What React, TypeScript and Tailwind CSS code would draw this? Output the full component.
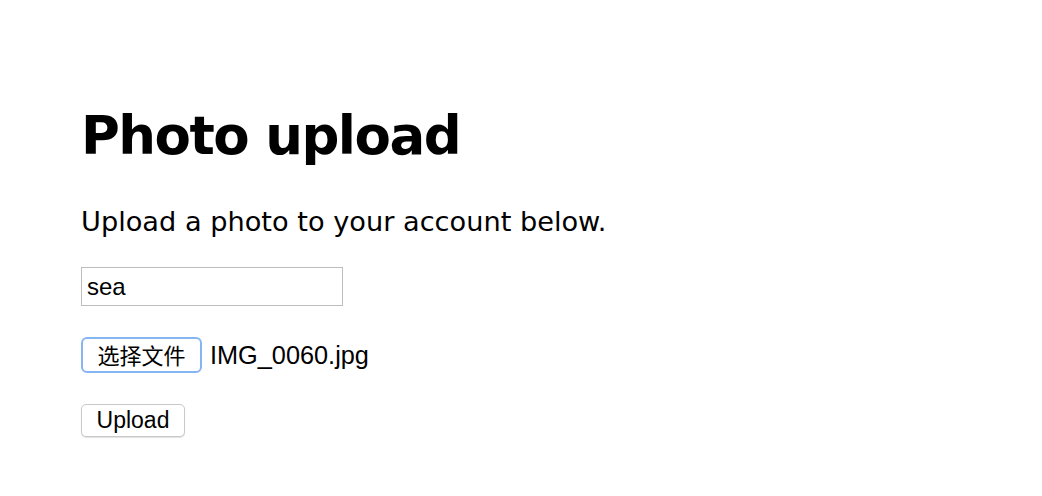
export default function App() {
  return (
    <div className="min-h-screen bg-white pl-[81px] pt-[104px] text-black">
      <h1
        className="text-[53px] font-bold leading-[64px] tracking-[-1.5px]"
        style={{ fontFamily: '"DejaVu Sans", sans-serif' }}
      >
        Photo upload
      </h1>
      <p
        className="mt-[38px] text-[27.2px] leading-[32px]"
        style={{ fontFamily: '"DejaVu Sans", sans-serif' }}
      >
        Upload a photo to your account below.
      </p>
      <div className="mt-[29px]" style={{ fontFamily: '"Liberation Sans", "Noto Sans CJK SC", sans-serif' }}>
        <input
          type="text"
          defaultValue="sea"
          className="block h-[39px] w-[262px] border border-[#bdbdbd] px-[5px] text-[24px] text-black outline-none"
        />
        <div className="mt-[31px] flex h-[36px] items-center gap-[8px]">
          <button className="h-[36px] w-[121px] rounded-[6px] border-[2.5px] border-[#86b6f2] bg-white text-[22px] leading-none text-black">
            <span style={{ fontFamily: '"Noto Sans CJK SC", sans-serif' }}>选择文件</span>
          </button>
          <span className="text-[25.3px] leading-[30px] text-black">IMG_0060.jpg</span>
        </div>
        <button className="mt-[31px] block h-[33px] w-[104px] rounded-[5px] border border-[#c9c9c9] bg-white text-[23px] leading-none text-black shadow-[0_1px_1px_rgba(0,0,0,0.12)]">
          Upload
        </button>
      </div>
    </div>
  );
}
